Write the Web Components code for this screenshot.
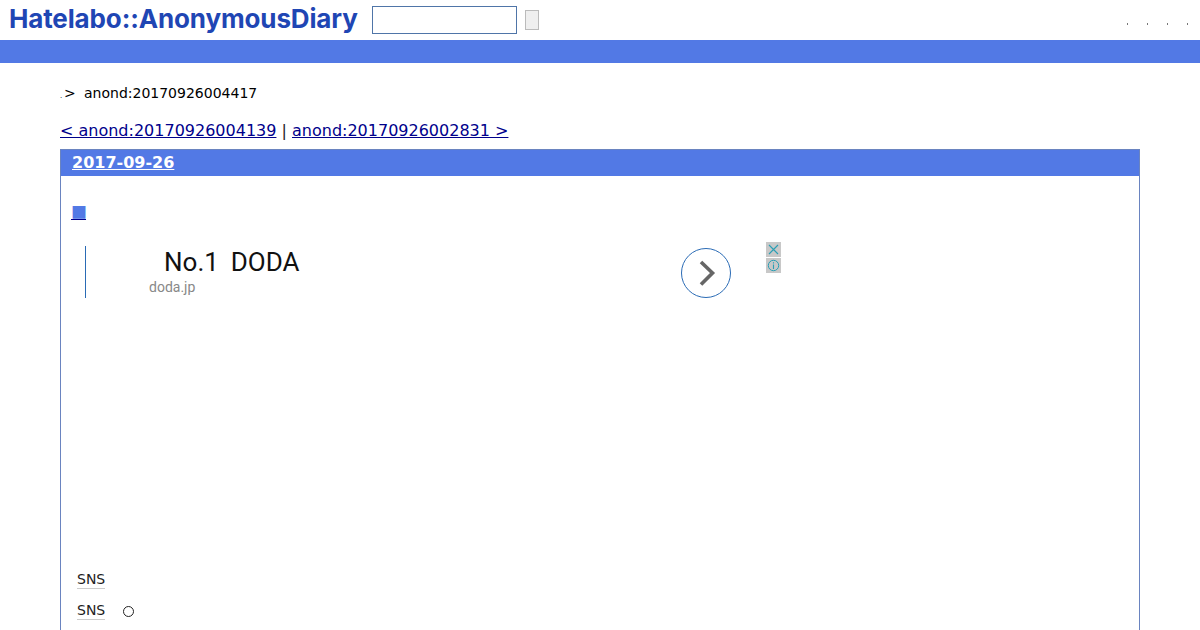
<!DOCTYPE html>
<html><head><meta charset="utf-8"><style>
html,body{margin:0;padding:0;height:630px;overflow:hidden;background:#fff;font-family:"DejaVu Sans",sans-serif;color:#000}
</style></head><body>
<template id="t-header"><style>
:host{display:block}
.top{height:40px;display:flex;align-items:flex-start;box-sizing:border-box;padding-left:9px}
.logo{font:700 26px/38px Inter,sans-serif;color:#1f46b4;width:363px;white-space:nowrap;letter-spacing:-.14px}
input{box-sizing:border-box;width:145px;height:28px;margin:6px 8px 0 0;border:1px solid #4f75a8;padding:0;background:#fff}
button{box-sizing:border-box;width:14px;height:20px;margin-top:10px;border:1px solid #bbb;background:#efefef;padding:0}
.marks{margin-left:auto;display:flex;gap:19px;padding:23px 12px 0 0}
.marks i{display:block;width:1px;height:2px;background:#777}
.bar{height:23px;background:#5279e5}
</style><div class="top"><div class="logo">Hatelabo::AnonymousDiary</div><input aria-label="search"><button aria-label="go"></button><div class="marks"><i></i><i></i><i></i><i></i></div></div><div class="bar"></div></template>

<template id="t-crumb"><style>
:host{display:block;padding:22px 0 0 60px;font-size:14px;line-height:16px;height:36px;box-sizing:content-box}
.w{display:flex;align-items:baseline}
.d{font-size:7px;width:5px}
.g{width:19px;font-size:14px;margin-left:-1px;padding-right:1px}
</style><div class="w"><span class="d">.</span><span class="g">&gt;</span><span><slot></slot></span></div></template>

<template id="t-pager"><style>
:host{display:block;padding:0 60px;font-size:16px;line-height:19px;height:19px;white-space:nowrap;color:#222}
::slotted(a){color:#00008b}
</style><slot></slot></template>

<template id="t-section"><style>
:host{display:block;margin:9px 60px 0;border:1px solid #6a84c0;border-bottom:0;box-sizing:border-box;height:481px;overflow:hidden}
.h{height:27px;margin:-1px -1px 0;background:#5279e5;padding-left:12px;font:700 16px/27px "DejaVu Sans",sans-serif}
.h a{color:#fff}
.b{padding:27px 11px 0}
</style><div class="h"><a href="#"><slot name="date"></slot></a></div><div class="b"><slot></slot></div></template>

<template id="t-ad"><style>
:host{display:block;font-family:Roboto,sans-serif}
.mark{display:block;width:max-content;margin-left:-1px;font:16px/17px "Noto Sans CJK JP",sans-serif;letter-spacing:-1px;color:#5279e5;text-decoration:underline;text-decoration-color:#00008b;height:17px}
.row{display:flex;align-items:flex-start;margin-top:26px;margin-left:13px}
.rule{width:1px;height:52px;background:#2a6bb5;flex:none}
.txt{width:532px;padding-left:63px;box-sizing:border-box;flex:none}
.t{font-size:26px;line-height:30px;padding:1px 0 0 15px;white-space:pre;color:#111;word-spacing:-.5px}
.u{font-size:14px;line-height:16px;color:#888;margin-top:2px}
.go{margin:2px 0 0 63px;flex:none}
.adc{display:flex;flex-direction:column;gap:1px;margin:-4px 0 0 35px}
.adc div{width:15px;height:15px;background:#c8c8c8;display:block}
svg{display:block}
</style><a class="mark" href="#">■</a><div class="row"><div class="rule"></div><div class="txt"><div class="t">No.1  DODA</div><div class="u">doda.jp</div></div>
<svg class="go" width="50" height="50" viewBox="0 0 50 50"><circle cx="25" cy="25" r="24.5" fill="#fff" stroke="#2a6bb5"/><path d="M20 14 L31.5 25 L20 36.5" fill="none" stroke="#666" stroke-width="3.6"/></svg>
<div class="adc"><div><svg width="15" height="15" viewBox="0 0 15 15"><path d="M3 3 L12 12 M12 3 L3 12" stroke="#2a9fb5" stroke-width="1.1"/></svg></div><div><svg width="15" height="15" viewBox="0 0 15 15"><circle cx="7.5" cy="7.5" r="5.2" fill="none" stroke="#2a9fb5"/><path d="M7.5 6.5 V11 M7.5 4.2 V5.5" stroke="#2a9fb5" stroke-width="1.1"/></svg></div></div></div></template>

<template id="t-share"><style>
:host{display:block;margin-left:5px;font-size:14px;line-height:17px}
.r{display:flex;align-items:center;height:17px}
.l{border-bottom:1px solid #ccc;color:#222}
</style><div class="r"><span class="l"><slot></slot></span><slot name="x"></slot></div></template>
<template id="t-circle"><style>:host{display:block;width:11px;height:11px;margin-left:18px;margin-top:1px;border-radius:50%;border:1px solid #222;box-sizing:border-box}</style></template>

<ad-header></ad-header>
<ad-crumb>anond:20170926004417</ad-crumb>
<ad-pager><a href="#">&lt; anond:20170926004139</a> | <a href="#">anond:20170926002831 &gt;</a></ad-pager>
<ad-section><span slot="date">2017-09-26</span>
<ad-unit></ad-unit>
<ad-share style="margin-top:273px">SNS</ad-share>
<ad-share style="margin-top:14px">SNS<ad-circle slot="x"></ad-circle></ad-share>
</ad-section>
<script>
for(const [n,id] of [['ad-header','t-header'],['ad-crumb','t-crumb'],['ad-pager','t-pager'],['ad-section','t-section'],['ad-unit','t-ad'],['ad-share','t-share'],['ad-circle','t-circle']]){
customElements.define(n,class extends HTMLElement{constructor(){super();this.attachShadow({mode:'open'}).appendChild(document.getElementById(id).content.cloneNode(true))}})
}
</script>
</body></html>
